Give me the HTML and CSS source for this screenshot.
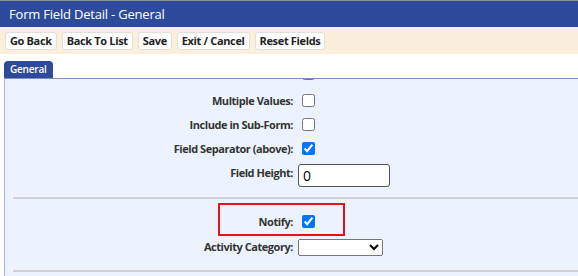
FILE: index.html
```html
<!DOCTYPE html>
<html lang="en">
<head>
    <meta charset="UTF-8">
    <title>Form Field Detail - General</title>
    <link rel="stylesheet" href="styles.css">
</head>
<body>
    <header class="title-bar">Form Field Detail - General</header>

    <!-- Toolbar -->
    <div class="toolbar">
        <button class="tool-btn">Go Back</button>
        <button class="tool-btn">Back To List</button>
        <button class="tool-btn">Save</button>
        <button class="tool-btn">Exit / Cancel</button>
        <button class="tool-btn">Reset Fields</button>
    </div>

    <!-- Tabs -->
    <nav class="tabs">
        <span class="tab active">General</span>
    </nav>

    <section class="panel">
        <div class="panel-scroll">
            <div class="form-rows">
                <span class="field-label"></span>
                <div class="field-ctl cut-row"><input type="checkbox"></div>

                <label class="field-label">Multiple Values:</label>
                <div class="field-ctl"><input type="checkbox"></div>

                <label class="field-label">Include in Sub-Form:</label>
                <div class="field-ctl"><input type="checkbox"></div>

                <label class="field-label">Field Separator (above):</label>
                <div class="field-ctl"><input type="checkbox" checked></div>

                <label class="field-label">Field Height:</label>
                <div class="field-ctl"><input type="text" class="text-input" value="0"></div>
            </div>

            <hr class="separator">

            <div class="form-rows notify-rows">
                <label class="field-label">Notify:</label>
                <div class="field-ctl"><input type="checkbox" checked></div>

                <label class="field-label">Activity Category:</label>
                <div class="field-ctl">
                    <select class="select-input"><option></option></select>
                </div>
                <span class="highlight"></span>
            </div>

            <hr class="separator">
        </div>
    </section>
</body>
</html>
```

FILE: styles.css
```css
:root {
    --brand: #2e4b9b;
    --toolbar: #faeedc;
    --panel: #edf3fe;
    --label: #333333;
}

body {
    margin: 0;
    font-family: 'Open Sans', sans-serif;
    background: #ffffff;
    overflow: hidden;
}

/* Title */
.title-bar {
    height: 26px;
    border-top: 1px solid #8a8f99;
    background: var(--brand);
    color: #ffffff;
    font-size: 13px;
    letter-spacing: -0.2px;
    line-height: 26px;
    padding-left: 9px;
}

/* Toolbar */
.toolbar {
    display: flex;
    gap: 5px;
    align-items: center;
    height: 27px;
    padding-left: 5px;
    background: var(--toolbar);
}

.tool-btn {
    height: 18px;
    padding: 0 4px;
    background: #ffffff;
    border: 1px solid #e3e0da;
    border-radius: 3px;
    font-family: inherit;
    font-size: 11px;
    font-weight: bold;
    letter-spacing: -0.35px;
    color: #222222;
}

/* Tabs */
.tabs {
    display: flex;
    height: 24px;
    align-items: flex-end;
    padding-left: 4px;
}

.tab {
    background: var(--brand);
    color: #ffffff;
    font-size: 10px;
    font-weight: 600;
    letter-spacing: -0.2px;
    padding: 0 6px;
    height: 17px;
    line-height: 17px;
    border-radius: 4px 4px 0 0;
}

/* Panel */
.panel {
    margin-left: 4px;
    border-top: 1px solid #7d8fc4;
    border-left: 1px solid #a9b8e2;
    background: var(--panel);
    height: 200px;
}

.panel-scroll {
    overflow: hidden;
    height: 100%;
}

.form-rows {
    display: grid;
    grid-template-columns: 288px 1fr;
    column-gap: 5px;
    grid-auto-rows: 24px;
    align-items: center;
    margin-top: -15px;
}

.field-label {
    text-align: right;
    font-size: 11px;
    font-weight: bold;
    letter-spacing: -0.45px;
    color: var(--label);
}

.field-ctl {
    display: flex;
    align-items: center;
}

.field-ctl input[type="checkbox"] {
    margin: 0 0 0 4px;
    width: 13px;
    height: 13px;
}

.cut-row input[type="checkbox"] {
    margin-bottom: 5px;
}

.text-input {
    width: 82px;
    height: 17px;
    padding: 2px 4px;
    border: 1px solid #555555;
    border-radius: 3px;
    font-family: inherit;
    font-size: 14px;
    margin-top: 6px;
}

.separator {
    margin: 13px 0 0 8px;
    border: none;
    border-top: 2px solid #cfd0d3;
}

.notify-rows {
    position: relative;
    margin-top: 10px;
    grid-template-rows: 24px 26px;
}

.select-input {
    width: 85px;
    height: 17px;
    font-size: 11px;
    margin-top: 2px;
}

/* Annotation box */
.highlight {
    position: absolute;
    left: 213px;
    top: -6px;
    width: 123px;
    height: 29px;
    border: 2px solid #e8121a;
    pointer-events: none;
}

.notify-rows + .separator {
    margin-top: 11px;
}
```
